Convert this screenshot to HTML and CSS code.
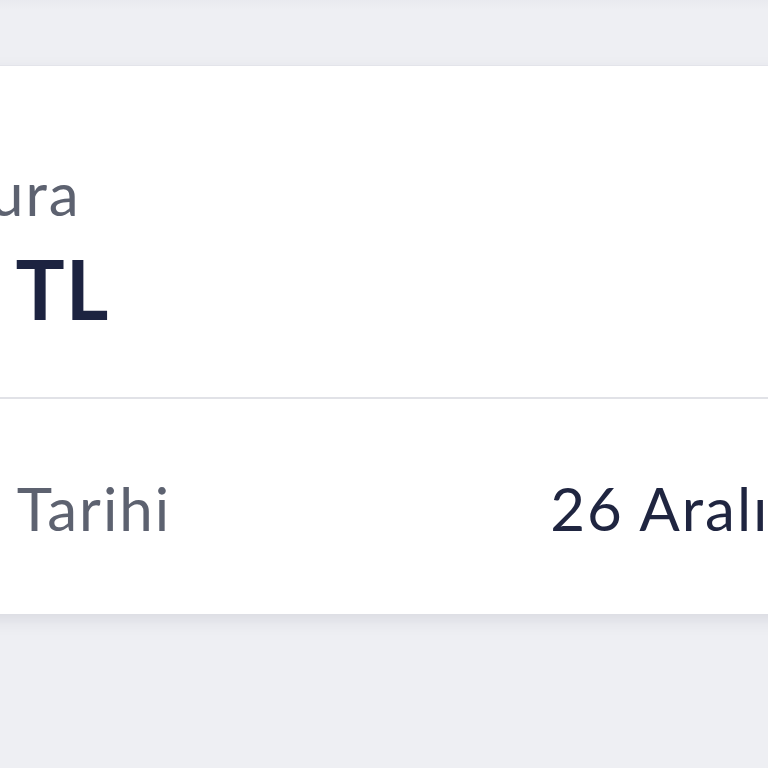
FILE: index.html
```html
<!DOCTYPE html>
<html lang="tr">
<head>
<meta charset="utf-8">
<link rel="stylesheet" href="styles.css">
</head>
<body>
<div class="page">
  <section class="card">
    <div class="summary">
      <div class="label title">Toplam Fatura</div>
      <div class="amount"><span class="num">1.850,40</span> <span class="cur">TL</span></div>
    </div>
    <div class="divider"></div>
    <div class="row">
      <span class="label">Son Ödeme Tarihi</span>
      <span class="value">26 Aralık 2023</span>
    </div>
  </section>
</div>
</body>
</html>
```
FILE: styles.css
```css
html, body {
  margin: 0;
  padding: 0;
  background: #eeeff3;
  overflow: hidden;
}
.page {
  width: 768px;
  height: 768px;
  padding-top: 66px;
  box-sizing: border-box;
  background: linear-gradient(#e9eaef 0, #eeeff3 10px, #eeeff3 100%);
  overflow: hidden;
  font-family: "Lato", "Noto Sans", sans-serif;
}
.card {
  margin-left: -374px;
  width: 1600px;
  background: #ffffff;
  box-shadow: 0 -1px 0 #e3e4ea, 0 6px 16px rgba(40, 44, 80, 0.10);
}
.summary {
  padding: 91px 48px 60px;
}
.label {
  font-size: 60px;
  line-height: 1.2;
  letter-spacing: 2px;
  color: #5d6270;
}
.title {
  word-spacing: 11px;
}
.amount {
  margin-top: 10px;
  font-size: 82px;
  line-height: 1.2;
  font-weight: 700;
  letter-spacing: -0.5px;
  color: #1c2340;
}
.cur {
  margin-left: 2px;
  letter-spacing: 1px;
}
.divider {
  height: 2px;
  background: #e1e2e7;
}
.row {
  display: flex;
  padding: 73px 48px 70px;
}
.value {
  margin-left: 379px;
  font-size: 60px;
  line-height: 1.2;
  letter-spacing: 2px;
  color: #1f2540;
}
```
